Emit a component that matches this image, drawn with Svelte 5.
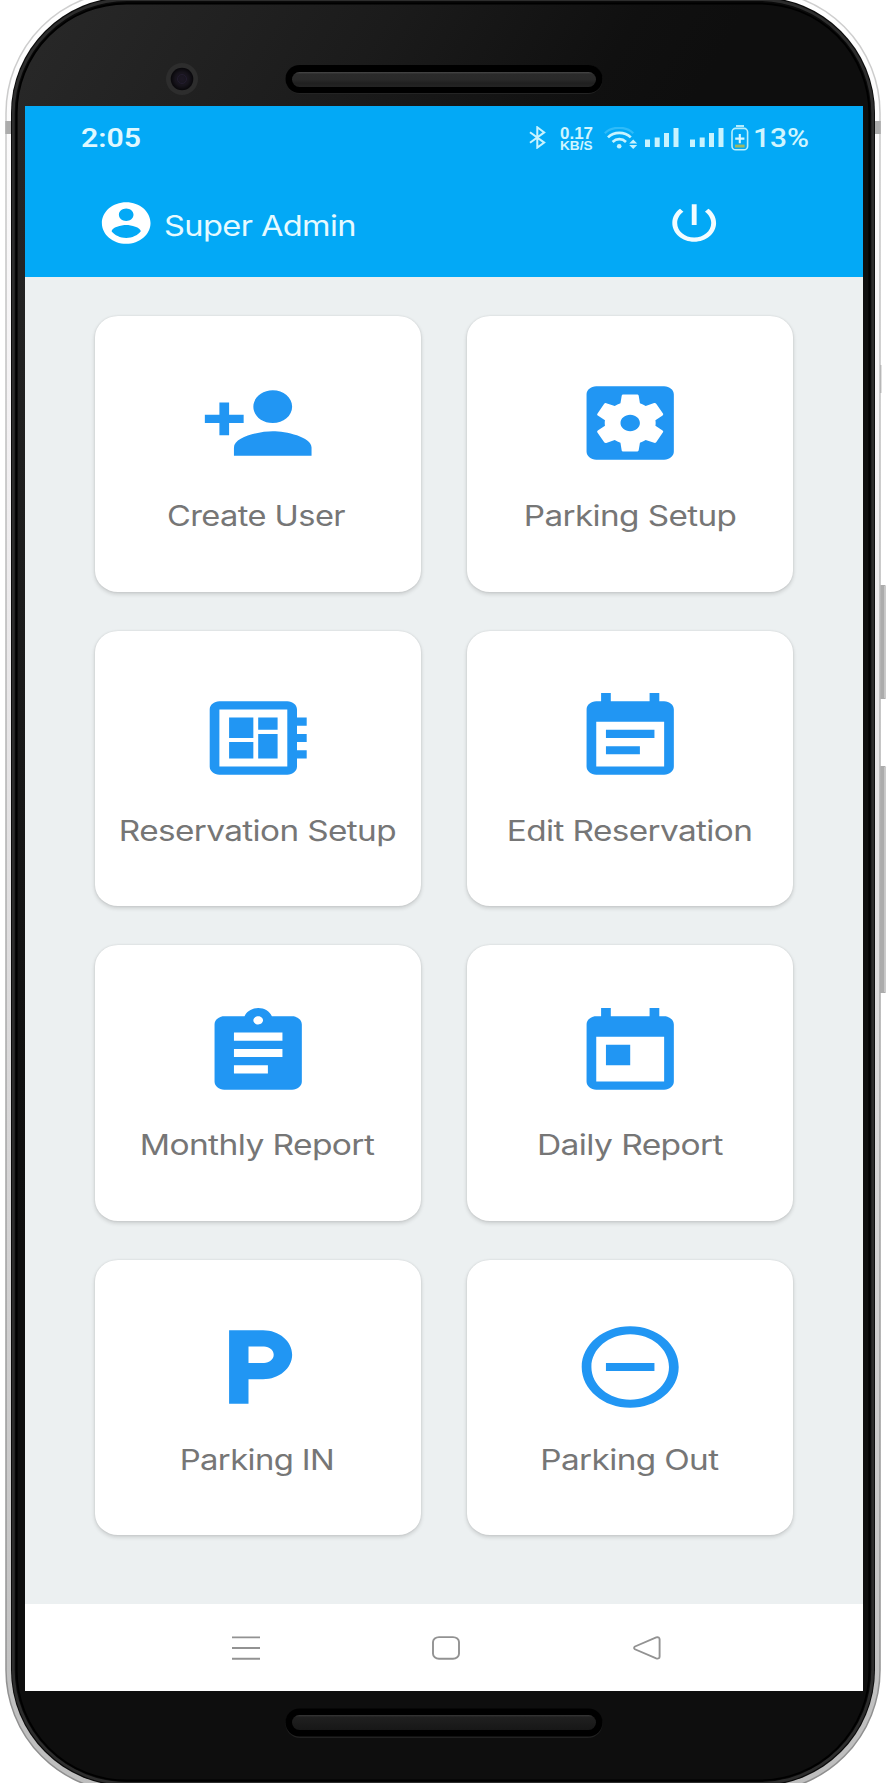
<script>
  const tiles = [
    { label: 'Create User', start: 72, width: 178, icon: 'M15 12c2.21 0 4-1.79 4-4s-1.79-4-4-4-4 1.79-4 4 1.79 4 4 4zm-9-2V7H4v3H1v2h3v3h2v-3h3v-2H6zm9 4c-2.67 0-8 1.34-8 4v2h16v-2c0-2.66-5.33-4-8-4z' },
    { label: 'Parking Setup', start: 56.8, width: 212.5, icon: 'M12 10c-1.1 0-2 .9-2 2s.9 2 2 2 2-.9 2-2-.9-2-2-2zm7-7H5c-1.11 0-2 .9-2 2v14c0 1.1.89 2 2 2h14c1.11 0 2-.9 2-2V5c0-1.1-.89-2-2-2zm-1.75 9c0 .23-.02.46-.05.68l1.48 1.16c.13.11.17.3.08.45l-1.4 2.42c-.09.15-.27.21-.43.15l-1.74-.7c-.36.28-.76.51-1.18.69l-.26 1.85c-.03.17-.18.3-.35.3h-2.8c-.17 0-.32-.13-.35-.29l-.26-1.85c-.43-.18-.82-.41-1.18-.69l-1.74.7c-.16.06-.34 0-.43-.15l-1.4-2.42c-.09-.15-.05-.34.08-.45l1.48-1.16c-.03-.23-.05-.46-.05-.69 0-.23.02-.46.05-.68l-1.48-1.16c-.13-.11-.17-.3-.08-.45l1.4-2.42c.09-.15.27-.21.43-.15l1.74.7c.36-.28.76-.51 1.18-.69l.26-1.85c.03-.17.18-.3.35-.3h2.8c.17 0 .32.13.35.29l.26 1.85c.43.18.82.41 1.18.69l1.74-.7c.16-.06.34 0 .43.15l1.4 2.42c.09.15.05.34-.08.45l-1.48 1.16c.03.23.05.46.05.69z' },
    { label: 'Reservation Setup', start: 23.8, width: 277.2, icon: 'M22 9V7h-2V5c0-1.1-.9-2-2-2H4c-1.1 0-2 .9-2 2v14c0 1.1.9 2 2 2h14c1.1 0 2-.9 2-2v-2h2v-2h-2v-2h2v-2h-2V9h2zm-4 10H4V5h14v14zM6 13h5v4H6zm6-6h4v3h-4zM6 7h5v5H6zm6 4h4v6h-4z' },
    { label: 'Edit Reservation', start: 39.8, width: 245.5, icon: 'M17 10H7v2h10v-2zm2-7h-1V1h-2v2H8V1H6v2H5c-1.11 0-1.99.9-1.99 2L3 19c0 1.1.89 2 2 2h14c1.1 0 2-.9 2-2V5c0-1.1-.9-2-2-2zm0 16H5V8h14v11zm-5-5H7v2h7v-2z' },
    { label: 'Monthly Report', start: 44.7, width: 234.6, icon: 'M19 3h-4.18C14.4 1.84 13.3 1 12 1c-1.3 0-2.4.84-2.82 2H5c-1.1 0-2 .9-2 2v14c0 1.1.9 2 2 2h14c1.1 0 2-.9 2-2V5c0-1.1-.9-2-2-2zm-7 0c.55 0 1 .45 1 1s-.45 1-1 1-1-.45-1-1 .45-1 1-1zm2 14H7v-2h7v2zm3-4H7v-2h10v2zm0-4H7V7h10v2z' },
    { label: 'Daily Report', start: 70, width: 186, icon: 'M19 3h-1V1h-2v2H8V1H6v2H5c-1.11 0-1.99.9-1.99 2L3 19c0 1.1.89 2 2 2h14c1.1 0 2-.9 2-2V5c0-1.1-.9-2-2-2zm0 16H5V8h14v11zM7 10h5v5H7z' },
    { label: 'Parking IN', start: 84.7, width: 154.5, icon: 'M13 3H6v18h4v-6h3c3.31 0 6-2.69 6-6s-2.69-6-6-6zm.2 8H10V7h3.2c1.1 0 2 .9 2 2s-.9 2-2 2z' },
    { label: 'Parking Out', start: 73.3, width: 178.2, icon: 'M7 11v2h10v-2H7zm5-9C6.48 2 2 6.48 2 12s4.48 10 10 10 10-4.48 10-10S17.52 2 12 2zm0 18c-4.41 0-8-3.59-8-8s3.59-8 8-8 8 3.59 8 8-3.59 8-8 8z' }
  ];
</script>

{#snippet signal()}
  <svg class="signal" width="34" height="19.5" viewBox="0 0 34 19.5">
    <path d="M0 11.5h5V19H0zM9.7 9.5h5V19h-5zM19 5h5v14h-5zM28.5 0h5v19h-5z" fill="#c8f3fe" />
  </svg>
{/snippet}

<div class="stage">
  <svg class="shell" width="891" height="1783" viewBox="0 0 891 1783" aria-hidden="true">
    <defs>
      <linearGradient id="metal" x1="0" y1="0" x2="0" y2="1">
        <stop offset="0" stop-color="#fff" />
        <stop offset=".25" stop-color="#f2f0f2" />
        <stop offset="1" stop-color="#bdbdbd" />
      </linearGradient>
      <linearGradient id="rim" x1="0" y1="0" x2="0" y2="1">
        <stop offset="0" stop-color="#cfcfcf" />
        <stop offset="1" stop-color="#8d8d8d" />
      </linearGradient>
      <linearGradient id="face" gradientUnits="userSpaceOnUse" x1="30" y1="20" x2="560" y2="330">
        <stop offset="0" stop-color="#282828" />
        <stop offset=".5" stop-color="#1b1b1b" />
        <stop offset=".85" stop-color="#101010" />
        <stop offset="1" stop-color="#0e0e0e" />
      </linearGradient>
      <linearGradient id="grille" x1="0" y1="0" x2="0" y2="1">
        <stop offset="0" stop-color="#484848" />
        <stop offset=".14" stop-color="#2b2b2b" />
        <stop offset=".5" stop-color="#292929" />
        <stop offset=".75" stop-color="#202020" />
        <stop offset="1" stop-color="#232323" />
      </linearGradient>
      <linearGradient id="grilleLow" x1="0" y1="0" x2="0" y2="1">
        <stop offset="0" stop-color="#383838" />
        <stop offset=".14" stop-color="#202020" />
        <stop offset="1" stop-color="#171717" />
      </linearGradient>
      <radialGradient id="lens">
        <stop offset="0" stop-color="#1d1825" />
        <stop offset=".6" stop-color="#17141c" />
        <stop offset="1" stop-color="#08070a" />
      </radialGradient>
    </defs>
    <rect x="879" y="585" width="7" height="114" rx="1.5" fill="#acacac" />
    <rect x="884.3" y="586" width="1.5" height="112" fill="#d2d2d2" />
    <rect x="879" y="766" width="7" height="227" rx="1.5" fill="#acacac" />
    <rect x="884.3" y="767" width="1.5" height="225" fill="#d2d2d2" />
    <rect x="880" y="365" width="1.3" height="28" fill="#999" />
    <rect x="6" y="-9" width="874" height="1801" rx="122" fill="url(#metal)" stroke="url(#rim)" stroke-width="1.5" />
    <path d="M5.3 121H11v13H5.3zM875 121h5.8v13H875z" fill="#acacac" />
    <rect x="11" y="-3" width="864" height="1789" rx="116" fill="#0a0a0a" />
    <rect x="13.3" y="-0.5" width="859.4" height="1784" rx="114" fill="none" stroke="#2d2d2d" stroke-width="2.8" />
    <rect x="16.7" y="3.5" width="852.6" height="1777" rx="110" fill="url(#face)" stroke="#000" stroke-width="1.8" />
    <rect x="285.5" y="65" width="317" height="29" rx="14.5" fill="#242424" />
    <rect x="285.5" y="65" width="317" height="28" rx="14" fill="#000" />
    <rect x="292" y="72" width="304" height="15" rx="7.5" fill="url(#grille)" />
    <rect x="285.5" y="1709" width="317" height="29" rx="14.5" fill="#222" />
    <rect x="285.5" y="1708.5" width="317" height="28" rx="14" fill="#000" />
    <rect x="292" y="1715" width="304" height="15" rx="7.5" fill="url(#grilleLow)" />
    <circle cx="182" cy="79" r="16" fill="#2d2d2d" />
    <circle cx="182" cy="79" r="11.3" fill="url(#lens)" />
    <circle cx="182" cy="79" r="4.5" fill="none" stroke="#221c2e" stroke-width="1" />
  </svg>

  <main class="screen">
    <header>
      <div class="status">
        <svg width="61" height="28" viewBox="0 0 61 28">
          <text class="clock" x="0" y="22" textLength="60" lengthAdjust="spacingAndGlyphs">2:05</text>
        </svg>
        <div class="indicators">
          <svg class="bt" width="17" height="23" viewBox="0 0 17 23">
            <path d="M1 6.2 15.2 16.6 8.3 21.6V1.3L15.2 6.4 1 16.8" fill="none" stroke="#c8f3fe" stroke-width="2" />
          </svg>
          <svg class="rate" width="33" height="26" viewBox="0 0 33 26">
            <text class="amount" x="0" y="12.8" textLength="33" lengthAdjust="spacingAndGlyphs">0.17</text>
            <text class="unit" x="0" y="23.6" textLength="32.5" lengthAdjust="spacingAndGlyphs">KB/S</text>
          </svg>
          <svg class="wifi" width="34" height="22" viewBox="0 0 34 22">
            <g fill="none" stroke="#c8f3fe" stroke-width="2.7">
              <path d="M.8 6.2C8-1 22-1 29.3 6.2" stroke="#2fbbf9" stroke-width="2.2" />
              <path d="M4 10.4C10 4.4 20.6 4.4 26.8 10.4" />
              <path d="M8.6 14.9c3.8-3.6 9.6-3.6 13.4 0" />
            </g>
            <circle cx="15.2" cy="19.2" r="2.3" fill="#c8f3fe" />
            <path d="m25.2 16.4 4-4 4 4zM25.2 18l4 4 4-4z" fill="#c8f3fe" />
          </svg>
          {@render signal()}
          {@render signal()}
          <svg class="battery" width="18" height="26" viewBox="0 0 18 26">
            <path d="M5 1h8" stroke="#c8f3fe" stroke-width="1.8" />
            <rect x="1" y="3.4" width="15.6" height="21.4" rx="3.6" fill="none" stroke="#b9effd" stroke-width="1.6" />
            <path d="M8.8 9v9.2M4.2 13.6h9.2" stroke="#d8f7ff" stroke-width="2.1" />
            <path d="M4 19.6h9.6v2.9H4z" fill="#9fb865" />
          </svg>
          <svg class="percent" width="57" height="28" viewBox="0 0 57 28">
            <text x="0" y="22" textLength="56" lengthAdjust="spacingAndGlyphs">13%</text>
          </svg>
        </div>
      </div>
      <div class="appbar">
        <div class="user">
          <svg width="58.4" height="50" viewBox="0 0 24 24" preserveAspectRatio="none" fill="#fff">
            <path d="M12 2C6.48 2 2 6.48 2 12s4.48 10 10 10 10-4.48 10-10S17.52 2 12 2zm0 3c1.66 0 3 1.34 3 3s-1.34 3-3 3-3-1.34-3-3 1.34-3 3-3zm0 14.2c-2.5 0-4.71-1.28-6-3.22.03-1.99 4-3.08 6-3.08 1.99 0 5.97 1.09 6 3.08-1.29 1.94-3.5 3.22-6 3.22z" />
          </svg>
          <svg class="name" width="194" height="40" viewBox="0 0 194 40">
            <text x="0" y="27.6" textLength="192" lengthAdjust="spacingAndGlyphs">Super Admin</text>
          </svg>
        </div>
        <svg width="58.4" height="50" viewBox="0 0 24 24" preserveAspectRatio="none" fill="#f2fcff">
          <path d="M13 3h-2v10h2V3zm4.83 2.17l-1.42 1.42C17.99 7.86 19 9.81 19 12c0 3.87-3.13 7-7 7s-7-3.13-7-7c0-2.19 1.01-4.14 2.58-5.42L6.17 5.17C4.23 6.82 3 9.26 3 12c0 4.97 4.03 9 9 9s9-4.03 9-9c0-2.74-1.23-5.18-3.17-6.83z" />
        </svg>
      </div>
    </header>

    <section class="tiles">
      {#each tiles as tile}
        <article class="tile">
          <svg class="icon" viewBox="0 0 24 24" preserveAspectRatio="none"><path d={tile.icon} fill-rule="evenodd" /></svg>
          <svg class="label" viewBox="0 0 326 44">
            <text x={tile.start} y="29" textLength={tile.width} lengthAdjust="spacingAndGlyphs">{tile.label}</text>
          </svg>
        </article>
      {/each}
    </section>

    <nav>
      <svg width="28" height="24" viewBox="0 0 28 24"><path d="M0 1.4h28M0 12h28M0 22.8h28" /></svg>
      <svg width="28" height="24" viewBox="0 0 28 24"><rect x="1" y="1.1" width="26" height="21.6" rx="6" ry="5" /></svg>
      <svg width="28" height="24" viewBox="0 0 28 24"><path d="M2 10.5 23.2 1.4Q26.6.6 26.6 3.6V20.4Q26.6 23.2 23.2 22.4L2 13.3Q.2 11.9 2 10.5Z" /></svg>
    </nav>
  </main>
</div>

<style>
  :global(body) {
    background: #fff;
  }
  svg {
    display: block;
    flex: none;
  }
  .stage {
    position: relative;
    box-sizing: border-box;
    width: 891px;
    height: 1783px;
    padding: 106px 28px 92px 25px;
    overflow: hidden;
  }
  .shell {
    position: absolute;
    inset: 0;
  }
  .screen {
    position: relative;
    display: flex;
    flex-direction: column;
    width: 838px;
    height: 1585px;
    background: #ecf0f1;
    font-family: Inter, "Liberation Sans", sans-serif;
  }
  header {
    box-sizing: border-box;
    height: 171px;
    background: #03a9f6;
  }
  .status {
    display: flex;
    justify-content: space-between;
    height: 92px;
    box-sizing: border-box;
    padding: 19px 53px 0 56px;
  }
  .status text {
    font-family: Roboto, "Liberation Sans", sans-serif;
    font-size: 25px;
    font-weight: 500;
    fill: #d0f5fe;
  }
  .status .clock {
    font-weight: 600;
    fill: #dff8ff;
  }
  .status .rate {
    overflow: visible;
    margin: 1px 11px 0 0;
  }
  .status .rate text {
    font-family: "Liberation Sans", sans-serif;
    font-weight: 700;
  }
  .status .rate .amount {
    font-size: 16.5px;
  }
  .status .rate .unit {
    font-size: 12px;
  }
  .indicators {
    display: flex;
    align-items: flex-start;
  }
  .bt {
    margin: 1px 14px 0 0;
  }
  .wifi {
    margin: 1.5px 7px 0 0;
  }
  .signal {
    margin: 3px 10.3px 0 0;
  }
  .signal + .signal {
    margin-right: 7.5px;
  }
  .battery {
    margin-right: 4px;
  }
  .appbar {
    display: flex;
    justify-content: space-between;
    padding: 0 139.3px 0 72px;
  }
  .user {
    display: flex;
    align-items: center;
    gap: 8.5px;
  }
  .name {
    margin-top: 9.5px;
  }
  .name text {
    font-size: 28px;
    letter-spacing: -0.5px;
    fill: #e6faff;
  }
  .tiles {
    display: grid;
    grid-template-columns: 326px 326px;
    grid-auto-rows: 275.3px;
    gap: 39.3px 46.3px;
    height: 1327px;
    box-sizing: border-box;
    padding: 39.3px 0 0 69.9px;
  }
  .tile {
    display: flex;
    flex-direction: column;
    align-items: center;
    box-sizing: border-box;
    padding-top: 58.1px;
    border-radius: 23px / 21px;
    background: #fff;
    box-shadow: 0 0 2px rgba(0, 0, 0, 0.1), 0 2px 4px rgba(0, 0, 0, 0.16);
  }
  .icon {
    width: 116.4px;
    height: 98px;
    fill: #2196f3;
  }
  .label {
    width: 326px;
    height: 44px;
    margin-top: 24.6px;
  }
  .label text {
    font-size: 27.8px;
    font-weight: 430;
    letter-spacing: -0.5px;
    fill: #767676;
  }
  nav {
    display: flex;
    justify-content: center;
    align-items: center;
    gap: 172.5px;
    height: 87px;
    padding-left: 4px;
    background: #fff;
  }
  nav svg {
    fill: none;
    stroke: #929292;
    stroke-width: 1.9;
  }
</style>
